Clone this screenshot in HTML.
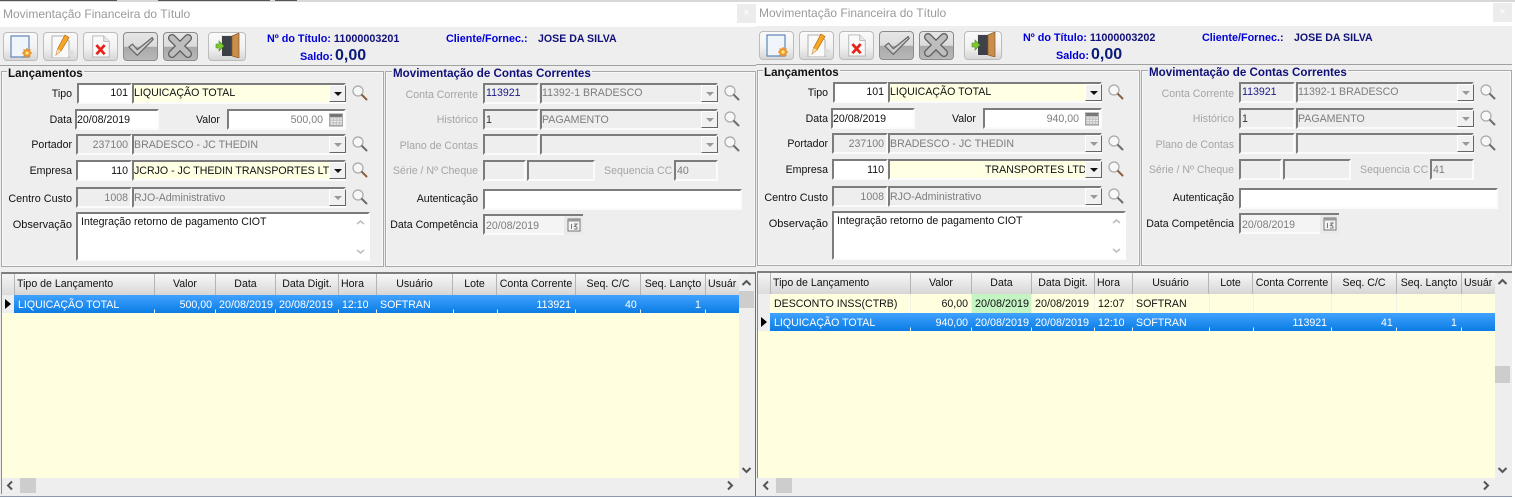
<!DOCTYPE html>
<html><head><meta charset="utf-8"><style>
html,body{margin:0;padding:0;width:1515px;height:498px;overflow:hidden;background:#fff}
body{position:relative;font:10.6px/14px "Liberation Sans",Arial,sans-serif;color:#111}
.w{position:absolute;width:757px;height:498px;top:0}
.w div,.w span,.w svg{position:absolute}
.w span{white-space:nowrap}
.t{left:3px;top:6px;font-size:12px;line-height:16px;color:#9a9a9a}
.tb{left:0;top:27px;width:756px;height:38px;background:#eeeeee}
.pn{left:0;top:65px;width:756px;height:206px;background:#eee;border-top:1px solid #a0a0a0}
.fs{border:1px solid #a8a8a8;box-shadow:inset 0 0 0 1px #f8f8f8;top:71px;height:194px}
.lg{top:67px;background:#eee;font-weight:bold;font-size:11.6px;line-height:14px;padding:0 1px;color:#111}
.b{top:32px;height:27px;border:1px solid #bcbcbc;border-radius:4px;background:linear-gradient(#fafafa,#f2f2f2 55%,#d6d6d6)}
.bd{border-color:#8c8c8c;background:linear-gradient(#e6e6e6,#dcdcdc 50%,#a9a9a9 52%,#b8b8b8)}
.bl{color:#0000d8;font-weight:bold;font-size:10.8px}
.l{text-align:right;height:14px;color:#111;margin-top:1px}
.g{color:#a5a5a5}
.i{box-sizing:border-box;border:2px solid;border-color:#7c7c7c #fbfbfb #fbfbfb #7c7c7c;background:#fff;height:21px;line-height:19px;padding:0 1px 0 0;overflow:hidden;white-space:nowrap;color:#111}
.f{line-height:17px}
.d{background:#eee;color:#7d7d7d}
.y{background:#ffffe4}
.r{text-align:right;padding-right:2px}
.cb{box-sizing:border-box;width:17px;height:17px;background:#f1f1f1;border:1px solid;border-color:#fff #666 #666 #fff}
.cb:after{content:"";position:absolute;left:4px;top:6px;border:4px solid transparent;border-top:4px solid #111;border-bottom:0}
.cb.o:after{border-top-color:#999}
.gh{top:274px;height:21px;background:linear-gradient(#f8f8f8,#e9e9e9 45%,#d6d6d6);border-right:1px solid #b4b4b4;box-sizing:border-box;text-align:center;line-height:21px;color:#111;overflow:hidden}
.cell{height:18px;line-height:21px}
.rw{color:#fff}
.tick{width:1px;height:18px;background:linear-gradient(transparent 80%,#e9f3ff 80%)}
</style></head><body>
<svg width="0" height="0" style="position:absolute"><defs>
<symbol id="m" viewBox="0 0 16 16"><circle cx="6" cy="6" r="5" fill="#f6f8f8" stroke="#a8a8a8" stroke-width="1.200"/><path d="M10 10l4.500 4.500" stroke="#6e6e6e" stroke-width="2" stroke-linecap="round"/></symbol>
<symbol id="mb" viewBox="0 0 16 16"><circle cx="6" cy="6" r="5" fill="#f6f8f8" stroke="#a8a8a8" stroke-width="1.200"/><path d="M10 10l4.500 4.500" stroke="#8a6040" stroke-width="2" stroke-linecap="round"/></symbol>
<symbol id="n" viewBox="0 0 24 24"><rect x="1" y="1" width="18" height="21" fill="#f0f5fb" stroke="#5f86bb" stroke-width="1.200"/><circle cx="17" cy="18" r="4" fill="#f0a030"/><path d="M17 13v10M12 18h10M13.500 14.500l7 7M20.500 14.500l-7 7" stroke="#e09030" stroke-width="1.200"/><circle cx="17" cy="18" r="1.800" fill="#ffe070"/></symbol>
<symbol id="e" viewBox="0 0 24 24"><path d="M2 2h12l5 5v17H2z" fill="#fafafa" stroke="#b0b0b0"/><path d="M19 16c3-1 5 1 5 3l-5 3z" fill="#ddd"/><path d="M6 21l1.500-6L15 1l4 2.500-8 13.500z" fill="#f5a623" stroke="#b86a10" stroke-width=".7"/><path d="M6 21l1.500-6 3.500 2z" fill="#f6d9a8"/></symbol>
<symbol id="x" viewBox="0 0 24 24"><path d="M3 1h12l6 6v17H3z" fill="#fafafa" stroke="#b4b4b4"/><path d="M15 1v6h6" fill="#e8e8e8" stroke="#b4b4b4"/><path d="M7 11l9 10M16 11l-9 10" stroke="#e8231a" stroke-width="3"/></symbol>
<symbol id="c" viewBox="0 0 30 24"><path d="M2 13l4-3 5 6L27 3l1 2L11 22z" fill="#cdcdcd" stroke="#666" stroke-width="1.300" stroke-linejoin="round"/></symbol>
<symbol id="k" viewBox="0 0 28 24"><path d="M6 4l16 16M22 4L6 20" fill="none" stroke="#5c5c5c" stroke-width="8" stroke-linecap="round"/><path d="M6 4l16 16M22 4L6 20" fill="none" stroke="#bdbdbd" stroke-width="5.500" stroke-linecap="round"/></symbol>
<symbol id="p" viewBox="0 0 30 25"><rect x="8" y="2" width="12" height="21" fill="#e8e8e8"/><rect x="9" y="3" width="10" height="20" fill="#3e4248"/><path d="M19 3l7-3v25l-7-2z" fill="#c98d4c" stroke="#8c5a28" stroke-width=".7"/><path d="M3 11h3V8l5 5-5 5v-3H3z" fill="#7cc832" stroke="#4d8a18" stroke-width=".6"/></symbol>
<symbol id="cal" viewBox="0 0 14 14"><rect x="0" y="1" width="14" height="12" fill="#c6c6c6" stroke="#8a8a8a"/><rect x="1" y="1" width="12" height="3" fill="#777"/><path d="M2 6h2M5 6h2M8 6h2M11 6h2M2 8.500h2M5 8.500h2M8 8.500h2M11 8.500h2M2 11h2M5 11h2M8 11h2M11 11h2" stroke="#f0f0f0"/></symbol>
<symbol id="cl2" viewBox="0 0 14 14"><rect x="1" y="1" width="12" height="12" fill="#f4f4f4" stroke="#777"/><rect x="1" y="1" width="12" height="2.500" fill="#999"/><path d="M4.500 6v5M7 6h3L7.500 8.500c2 0 3 .5 2.500 2.500H7" fill="none" stroke="#777"/></symbol>
</defs></svg>

<div style="position:absolute;left:0;top:0;width:1515px;height:2px;background:#d8d8d8"></div>
<div style="position:absolute;left:0;top:0;width:117px;height:1px;background:#555"></div>
<div style="position:absolute;left:158px;top:0;width:112px;height:1px;background:#555"></div>
<div style="position:absolute;left:275px;top:0;width:22px;height:1px;background:#555"></div>

<!-- WINDOW 1 -->
<div class="w" style="left:0">
<span class="t">Movimentação Financeira do Título</span>
<div style="left:737px;top:4px;width:19px;height:19px;background:#ececec;color:#fff;text-align:center;line-height:18px">×</div>
<div class="tb"></div>
<div class="b" style="left:3px;width:33px"></div><svg style="left:10px;top:35px" width="24" height="24"><use href="#n"/></svg>
<div class="b" style="left:43px;width:33px"></div><svg style="left:50px;top:34px" width="24" height="24"><use href="#e"/></svg>
<div class="b" style="left:83px;width:33px"></div><svg style="left:90px;top:34px" width="22" height="24"><use href="#x"/></svg>
<div class="b bd" style="left:123px;width:33px"></div><svg style="left:127px;top:34px" width="28" height="24"><use href="#c"/></svg>
<div class="b bd" style="left:163px;width:33px"></div><svg style="left:166px;top:34px" width="28" height="24"><use href="#k"/></svg>
<div class="b" style="left:208px;width:36px"></div><svg style="left:213px;top:33px" width="30" height="25"><use href="#p"/></svg>
<span class="bl" style="left:267px;top:32px">Nº do Título: <span style="position:static;color:#10107a">11000003201</span></span>
<span class="bl" style="left:300px;top:50px">Saldo:</span>
<span style="left:335px;top:47px;font:bold 16px/18px 'Liberation Sans',sans-serif;color:#0a1a78">0,00</span>
<span class="bl" style="left:446px;top:32px">Cliente/Fornec.:</span>
<span style="left:538px;top:32px;font-weight:bold;color:#10107a">JOSE DA SILVA</span>
<div class="pn"></div>
<div class="fs" style="left:1px;width:381px"></div>
<div class="fs" style="left:385px;width:369px"></div>
<span class="lg" style="left:7px">Lançamentos</span>
<span class="lg" style="left:392px;color:#10107a">Movimentação de Contas Correntes</span>

<div class="l" style="left:0;width:72px;top:86px">Tipo</div>
<div class="i r f" style="left:77px;top:83px;width:55px">101</div>
<div class="i y f" style="left:132px;top:83px;width:214px">LIQUICAÇÃO TOTAL</div><div class="cb" style="left:329px;top:85px"></div>
<svg style="left:352px;top:85px" width="16" height="16"><use href="#mb"/></svg>

<div class="l" style="left:0;width:72px;top:112px">Data</div>
<div class="i" style="left:75px;top:109px;width:84px">20/08/2019</div>
<span style="left:196px;top:113px">Valor</span>
<div class="i r d" style="left:227px;top:109px;width:119px;background:#fff;padding-right:21px">500,00</div>
<svg style="left:329px;top:113px" width="14" height="14"><use href="#cal"/></svg>

<div class="l" style="left:0;width:72px;top:137px">Portador</div>
<div class="i d r" style="left:76px;top:134px;width:56px">237100</div>
<div class="i d" style="left:132px;top:134px;width:214px">BRADESCO - JC THEDIN</div><div class="cb o" style="left:329px;top:136px"></div>
<svg style="left:352px;top:136px" width="16" height="16"><use href="#m"/></svg>

<div class="l" style="left:0;width:72px;top:163px">Empresa</div>
<div class="i r" style="left:76px;top:160px;width:56px">110</div>
<div class="i y" style="left:132px;top:160px;width:214px">JCRJO - JC THEDIN TRANSPORTES LTDA</div><div class="cb" style="left:329px;top:162px"></div>
<svg style="left:352px;top:162px" width="16" height="16"><use href="#mb"/></svg>

<div class="l" style="left:0;width:72px;top:191px;font-size:10.8px">Centro Custo</div>
<div class="i d r" style="left:76px;top:187px;width:56px">1008</div>
<div class="i d" style="left:132px;top:187px;width:214px">RJO-Administrativo</div><div class="cb o" style="left:329px;top:189px"></div>
<svg style="left:352px;top:189px" width="16" height="16"><use href="#m"/></svg>

<div class="l" style="left:0;width:72px;top:217px;font-size:11px">Observação</div>
<div class="i" style="left:76px;top:212px;width:294px;height:49px;padding:1px 3px;line-height:15px;border-right-color:#fff">Integração retorno de pagamento CIOT</div>
<svg style="left:355px;top:219px" width="11" height="36"><path d="M2 5l3.500-3 3.500 3M2 31l3.500 3 3.500-3" fill="none" stroke="#bcbcbc" stroke-width="1.500"/></svg>

<div class="l g" style="left:385px;width:93px;top:87px">Conta Corrente</div>
<div class="i d f" style="left:483px;top:83px;width:56px;color:#1a1a8a;padding-left:1px">113921</div>
<div class="i d f" style="left:540px;top:83px;width:178px">11392-1 BRADESCO</div><div class="cb o" style="left:701px;top:85px"></div>
<svg style="left:724px;top:85px" width="16" height="16"><use href="#m"/></svg>

<div class="l g" style="left:385px;width:93px;top:112px">Histórico</div>
<div class="i d" style="left:483px;top:109px;width:56px;color:#333;padding-left:1px">1</div>
<div class="i d" style="left:540px;top:109px;width:178px">PAGAMENTO</div><div class="cb o" style="left:701px;top:111px"></div>
<svg style="left:724px;top:111px" width="16" height="16"><use href="#m"/></svg>

<div class="l g" style="left:385px;width:93px;top:138px">Plano de Contas</div>
<div class="i d" style="left:483px;top:134px;width:56px"></div>
<div class="i d" style="left:540px;top:134px;width:178px"></div><div class="cb o" style="left:701px;top:136px"></div>
<svg style="left:724px;top:136px" width="16" height="16"><use href="#m"/></svg>

<div class="l g" style="left:385px;width:93px;top:163px">Série / Nº Cheque</div>
<div class="i d" style="left:483px;top:160px;width:43px"></div>
<div class="i d" style="left:527px;top:160px;width:68px"></div>
<span class="g" style="left:604px;top:164px">Sequencia CC</span>
<div class="i d" style="left:674px;top:160px;width:44px;padding-left:1px">40</div>

<div class="l" style="left:385px;width:93px;top:191px">Autenticação</div>
<div class="i" style="left:483px;top:189px;width:259px">&nbsp;</div>

<div class="l" style="left:385px;width:93px;top:217px">Data Competência</div>
<div class="i d" style="left:483px;top:214px;width:81px;background:#f4f4f4;border-right:0;line-height:20px;padding-left:1px">20/08/2019</div>
<div style="left:564px;top:214px;width:19px;height:21px;background:#eaeaea;border-top:2px solid #7c7c7c;box-sizing:border-box"></div>
<svg style="left:567px;top:218px" width="14" height="14"><use href="#cl2"/></svg>

<div style="left:0;top:271px;width:756px;height:225px;background:#eee"></div>
<div style="left:1px;top:272px;width:755px;height:2px;background:#7e7e7e"></div>
<div style="left:1px;top:272px;width:1px;height:222px;background:#8a8a8a"></div>
<div style="left:755px;top:272px;width:2px;height:224px;background:#6e6e6e"></div>
<div style="left:2px;top:295px;width:737px;height:183px;background:#ffffe0"></div>

<div class="gh" style="left:2px;width:13px;background:linear-gradient(#f4f4f4,#dcdcdc)"></div>
<div class="gh" style="left:15px;width:140px;text-align:left;padding-left:2px">Tipo de Lançamento</div>
<div class="gh" style="left:155px;width:61px">Valor</div>
<div class="gh" style="left:216px;width:60px">Data</div>
<div class="gh" style="left:276px;width:63px">Data Digit.</div>
<div class="gh" style="left:339px;width:38px;text-align:left;padding-left:2px">Hora</div>
<div class="gh" style="left:377px;width:76px">Usuário</div>
<div class="gh" style="left:453px;width:44px">Lote</div>
<div class="gh" style="left:497px;width:79px">Conta Corrente</div>
<div class="gh" style="left:576px;width:65px">Seq. C/C</div>
<div class="gh" style="left:641px;width:65px">Seq. Lançto</div>
<div class="gh" style="left:706px;width:33px;text-align:left;padding-left:2px;border-right:0">Usuár</div>

<div style="left:2px;top:295px;width:12px;height:18px;background:#eee"></div>
<div style="left:5px;top:299px;width:0;height:0;border:5px solid transparent;border-left:6px solid #000;border-right:0"></div>
<div style="left:14px;top:295px;width:725px;height:18px;background:linear-gradient(#40a2ff,#0a7ce4)"></div>
<span class="cell rw" style="left:18px;top:295px">LIQUICAÇÃO TOTAL</span>
<span class="cell rw" style="left:179.600px;top:295px">500,00</span>
<span class="cell rw" style="left:219px;top:295px;font-size:10.8px">20/08/2019</span>
<span class="cell rw" style="left:279px;top:295px;font-size:10.8px">20/08/2019</span>
<span class="cell rw" style="left:342px;top:295px">12:10</span>
<span class="cell rw" style="left:380px;top:295px">SOFTRAN</span>
<span class="cell rw" style="left:536.500px;top:295px">113921</span>
<span class="cell rw" style="left:625px;top:295px">40</span>
<span class="cell rw" style="left:695px;top:295px">1</span>
<div class="tick" style="left:154px;top:295px"></div><div class="tick" style="left:215px;top:295px"></div><div class="tick" style="left:275px;top:295px"></div><div class="tick" style="left:338px;top:295px"></div><div class="tick" style="left:376px;top:295px"></div><div class="tick" style="left:453px;top:295px"></div><div class="tick" style="left:497px;top:295px"></div><div class="tick" style="left:575px;top:295px"></div><div class="tick" style="left:640px;top:295px"></div><div class="tick" style="left:705px;top:295px"></div>

<div style="left:739px;top:291px;width:15px;height:17px;background:#cdcdcd"></div>
<svg style="left:741px;top:279px" width="11" height="8"><path d="M1.500 6l4-4 4 4" fill="none" stroke="#555" stroke-width="2"/></svg>
<svg style="left:741px;top:466px" width="11" height="8"><path d="M1.500 2l4 4 4-4" fill="none" stroke="#555" stroke-width="2"/></svg>
<div style="left:20px;top:478px;width:16px;height:15px;background:#cdcdcd"></div>
<svg style="left:6px;top:480px" width="8" height="11"><path d="M6 1.500l-4 4 4 4" fill="none" stroke="#555" stroke-width="2"/></svg>
<svg style="left:726px;top:480px" width="8" height="11"><path d="M2 1.500l4 4-4 4" fill="none" stroke="#555" stroke-width="2"/></svg>
<div style="left:0;top:496px;width:757px;height:1px;background:#8a99ad"></div>
</div>

<!-- WINDOW 2 -->
<div class="w" style="left:756px;top:-1px;overflow:visible">
<span class="t">Movimentação Financeira do Título</span>
<div style="left:737px;top:4px;width:19px;height:19px;background:#ececec;color:#fff;text-align:center;line-height:18px">×</div>
<div class="tb"></div>
<div class="b" style="left:3px;width:33px"></div><svg style="left:10px;top:35px" width="24" height="24"><use href="#n"/></svg>
<div class="b" style="left:43px;width:33px"></div><svg style="left:50px;top:34px" width="24" height="24"><use href="#e"/></svg>
<div class="b" style="left:83px;width:33px"></div><svg style="left:90px;top:34px" width="22" height="24"><use href="#x"/></svg>
<div class="b bd" style="left:123px;width:33px"></div><svg style="left:127px;top:34px" width="28" height="24"><use href="#c"/></svg>
<div class="b bd" style="left:163px;width:33px"></div><svg style="left:166px;top:34px" width="28" height="24"><use href="#k"/></svg>
<div class="b" style="left:208px;width:36px"></div><svg style="left:213px;top:33px" width="30" height="25"><use href="#p"/></svg>
<span class="bl" style="left:267px;top:32px">Nº do Título: <span style="position:static;color:#10107a">11000003202</span></span>
<span class="bl" style="left:300px;top:50px">Saldo:</span>
<span style="left:335px;top:47px;font:bold 16px/18px 'Liberation Sans',sans-serif;color:#0a1a78">0,00</span>
<span class="bl" style="left:446px;top:32px">Cliente/Fornec.:</span>
<span style="left:538px;top:32px;font-weight:bold;color:#10107a">JOSE DA SILVA</span>
<div class="pn"></div>
<div class="fs" style="left:1px;width:381px"></div>
<div class="fs" style="left:385px;width:369px"></div>
<span class="lg" style="left:7px">Lançamentos</span>
<span class="lg" style="left:392px;color:#10107a">Movimentação de Contas Correntes</span>

<div class="l" style="left:0;width:72px;top:86px">Tipo</div>
<div class="i r f" style="left:77px;top:83px;width:55px">101</div>
<div class="i y f" style="left:132px;top:83px;width:214px">LIQUICAÇÃO TOTAL</div><div class="cb" style="left:329px;top:85px"></div>
<svg style="left:352px;top:85px" width="16" height="16"><use href="#mb"/></svg>

<div class="l" style="left:0;width:72px;top:112px">Data</div>
<div class="i" style="left:75px;top:109px;width:84px">20/08/2019</div>
<span style="left:196px;top:113px">Valor</span>
<div class="i r d" style="left:227px;top:109px;width:119px;background:#fff;padding-right:21px">940,00</div>
<svg style="left:329px;top:113px" width="14" height="14"><use href="#cal"/></svg>

<div class="l" style="left:0;width:72px;top:137px">Portador</div>
<div class="i d r" style="left:76px;top:134px;width:56px">237100</div>
<div class="i d" style="left:132px;top:134px;width:214px">BRADESCO - JC THEDIN</div><div class="cb o" style="left:329px;top:136px"></div>
<svg style="left:352px;top:136px" width="16" height="16"><use href="#m"/></svg>

<div class="l" style="left:0;width:72px;top:163px">Empresa</div>
<div class="i r" style="left:76px;top:160px;width:56px">110</div>
<div class="i y" style="left:132px;top:160px;width:214px"><span style="left:95px;top:0;line-height:19px">TRANSPORTES LTDA</span></div><div class="cb" style="left:329px;top:162px"></div>
<svg style="left:352px;top:162px" width="16" height="16"><use href="#mb"/></svg>

<div class="l" style="left:0;width:72px;top:191px;font-size:10.8px">Centro Custo</div>
<div class="i d r" style="left:76px;top:187px;width:56px">1008</div>
<div class="i d" style="left:132px;top:187px;width:214px">RJO-Administrativo</div><div class="cb o" style="left:329px;top:189px"></div>
<svg style="left:352px;top:189px" width="16" height="16"><use href="#m"/></svg>

<div class="l" style="left:0;width:72px;top:217px;font-size:11px">Observação</div>
<div class="i" style="left:76px;top:212px;width:294px;height:49px;padding:1px 3px;line-height:15px;border-right-color:#fff">Integração retorno de pagamento CIOT</div>
<svg style="left:355px;top:219px" width="11" height="36"><path d="M2 5l3.500-3 3.500 3M2 31l3.500 3 3.500-3" fill="none" stroke="#bcbcbc" stroke-width="1.500"/></svg>

<div class="l g" style="left:385px;width:93px;top:87px">Conta Corrente</div>
<div class="i d f" style="left:483px;top:83px;width:56px;color:#1a1a8a;padding-left:1px">113921</div>
<div class="i d f" style="left:540px;top:83px;width:178px">11392-1 BRADESCO</div><div class="cb o" style="left:701px;top:85px"></div>
<svg style="left:724px;top:85px" width="16" height="16"><use href="#m"/></svg>

<div class="l g" style="left:385px;width:93px;top:112px">Histórico</div>
<div class="i d" style="left:483px;top:109px;width:56px;color:#333;padding-left:1px">1</div>
<div class="i d" style="left:540px;top:109px;width:178px">PAGAMENTO</div><div class="cb o" style="left:701px;top:111px"></div>
<svg style="left:724px;top:111px" width="16" height="16"><use href="#m"/></svg>

<div class="l g" style="left:385px;width:93px;top:138px">Plano de Contas</div>
<div class="i d" style="left:483px;top:134px;width:56px"></div>
<div class="i d" style="left:540px;top:134px;width:178px"></div><div class="cb o" style="left:701px;top:136px"></div>
<svg style="left:724px;top:136px" width="16" height="16"><use href="#m"/></svg>

<div class="l g" style="left:385px;width:93px;top:163px">Série / Nº Cheque</div>
<div class="i d" style="left:483px;top:160px;width:43px"></div>
<div class="i d" style="left:527px;top:160px;width:68px"></div>
<span class="g" style="left:604px;top:164px">Sequencia CC</span>
<div class="i d" style="left:674px;top:160px;width:44px;padding-left:1px">41</div>

<div class="l" style="left:385px;width:93px;top:191px">Autenticação</div>
<div class="i" style="left:483px;top:189px;width:259px">&nbsp;</div>

<div class="l" style="left:385px;width:93px;top:217px">Data Competência</div>
<div class="i d" style="left:483px;top:214px;width:81px;background:#f4f4f4;border-right:0;line-height:20px;padding-left:1px">20/08/2019</div>
<div style="left:564px;top:214px;width:19px;height:21px;background:#eaeaea;border-top:2px solid #7c7c7c;box-sizing:border-box"></div>
<svg style="left:567px;top:218px" width="14" height="14"><use href="#cl2"/></svg>

<div style="left:0;top:271px;width:756px;height:226px;background:#eee"></div>
<div style="left:1px;top:272px;width:755px;height:2px;background:#7e7e7e"></div>
<div style="left:1px;top:272px;width:1px;height:222px;background:#8a8a8a"></div>
<div style="left:2px;top:295px;width:737px;height:184px;background:#ffffe0"></div>

<div class="gh" style="left:2px;width:13px;background:linear-gradient(#f4f4f4,#dcdcdc)"></div>
<div class="gh" style="left:15px;width:140px;text-align:left;padding-left:2px">Tipo de Lançamento</div>
<div class="gh" style="left:155px;width:61px">Valor</div>
<div class="gh" style="left:216px;width:60px">Data</div>
<div class="gh" style="left:276px;width:63px">Data Digit.</div>
<div class="gh" style="left:339px;width:38px;text-align:left;padding-left:2px">Hora</div>
<div class="gh" style="left:377px;width:76px">Usuário</div>
<div class="gh" style="left:453px;width:44px">Lote</div>
<div class="gh" style="left:497px;width:79px">Conta Corrente</div>
<div class="gh" style="left:576px;width:65px">Seq. C/C</div>
<div class="gh" style="left:641px;width:65px">Seq. Lançto</div>
<div class="gh" style="left:706px;width:33px;text-align:left;padding-left:2px;border-right:0">Usuár</div>

<div style="left:2px;top:295px;width:12px;height:37px;background:#eee"></div>
<div style="left:216px;top:295px;width:59px;height:19px;background:#c4f3c4"></div>
<span class="cell" style="left:18px;top:295px">DESCONTO INSS(CTRB)</span>
<span class="cell" style="left:185.500px;top:295px">60,00</span>
<span class="cell" style="left:219px;top:295px;font-size:10.8px">20/08/2019</span>
<span class="cell" style="left:279px;top:295px;font-size:10.8px">20/08/2019</span>
<span class="cell" style="left:342px;top:295px">12:07</span>
<span class="cell" style="left:380px;top:295px">SOFTRAN</span>
<div style="left:154px;top:295px;width:1px;height:19px;background:#f2f2e6"></div><div style="left:215px;top:295px;width:1px;height:19px;background:#f2f2e6"></div><div style="left:275px;top:295px;width:1px;height:19px;background:#f2f2e6"></div><div style="left:338px;top:295px;width:1px;height:19px;background:#f2f2e6"></div><div style="left:376px;top:295px;width:1px;height:19px;background:#f2f2e6"></div><div style="left:453px;top:295px;width:1px;height:19px;background:#f2f2e6"></div><div style="left:497px;top:295px;width:1px;height:19px;background:#f2f2e6"></div><div style="left:575px;top:295px;width:1px;height:19px;background:#f2f2e6"></div><div style="left:640px;top:295px;width:1px;height:19px;background:#f2f2e6"></div><div style="left:705px;top:295px;width:1px;height:19px;background:#f2f2e6"></div>

<div style="left:5px;top:318px;width:0;height:0;border:5px solid transparent;border-left:6px solid #000;border-right:0"></div>
<div style="left:14px;top:314px;width:725px;height:18px;background:linear-gradient(#40a2ff,#0a7ce4)"></div>
<span class="cell rw" style="left:18px;top:314px">LIQUICAÇÃO TOTAL</span>
<span class="cell rw" style="left:179.600px;top:314px">940,00</span>
<span class="cell rw" style="left:219px;top:314px;font-size:10.8px">20/08/2019</span>
<span class="cell rw" style="left:279px;top:314px;font-size:10.8px">20/08/2019</span>
<span class="cell rw" style="left:342px;top:314px">12:10</span>
<span class="cell rw" style="left:380px;top:314px">SOFTRAN</span>
<span class="cell rw" style="left:536.500px;top:314px">113921</span>
<span class="cell rw" style="left:625px;top:314px">41</span>
<span class="cell rw" style="left:695px;top:314px">1</span>
<div class="tick" style="left:154px;top:314px"></div><div class="tick" style="left:215px;top:314px"></div><div class="tick" style="left:275px;top:314px"></div><div class="tick" style="left:338px;top:314px"></div><div class="tick" style="left:376px;top:314px"></div><div class="tick" style="left:453px;top:314px"></div><div class="tick" style="left:497px;top:314px"></div><div class="tick" style="left:575px;top:314px"></div><div class="tick" style="left:640px;top:314px"></div><div class="tick" style="left:705px;top:314px"></div>

<div style="left:739px;top:367px;width:15px;height:17px;background:#cdcdcd"></div>
<svg style="left:741px;top:279px" width="11" height="8"><path d="M1.500 6l4-4 4 4" fill="none" stroke="#555" stroke-width="2"/></svg>
<svg style="left:741px;top:467px" width="11" height="8"><path d="M1.500 2l4 4 4-4" fill="none" stroke="#555" stroke-width="2"/></svg>
<div style="left:0;top:479px;width:756px;height:17px;background:#eee"></div>
<div style="left:20px;top:479px;width:16px;height:15px;background:#cdcdcd"></div>
<svg style="left:6px;top:481px" width="8" height="11"><path d="M6 1.500l-4 4 4 4" fill="none" stroke="#555" stroke-width="2"/></svg>
<svg style="left:726px;top:481px" width="8" height="11"><path d="M2 1.500l4 4-4 4" fill="none" stroke="#555" stroke-width="2"/></svg>
<div style="left:0;top:497px;width:756px;height:1px;background:#8a99ad"></div>
</div>
</body></html>
